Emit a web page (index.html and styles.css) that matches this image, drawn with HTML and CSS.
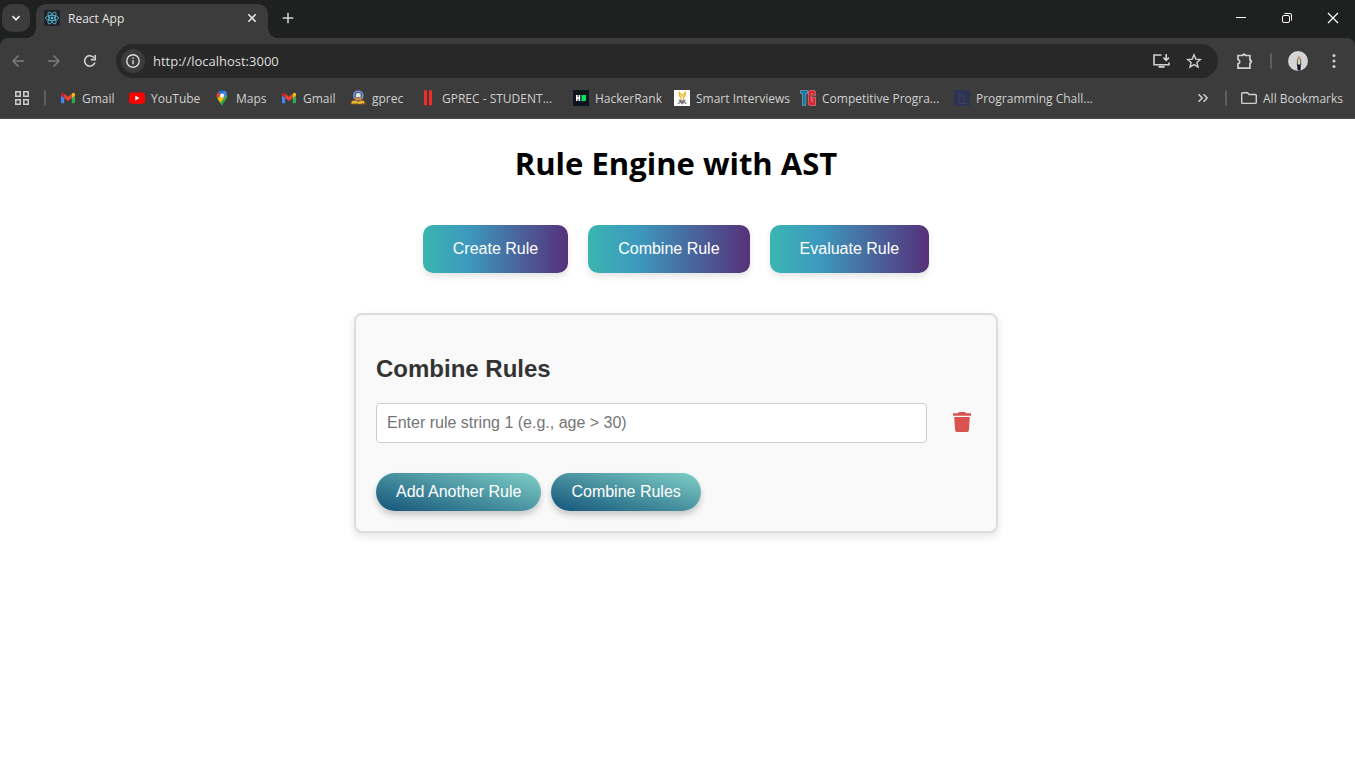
FILE: index.html
```html
<!DOCTYPE html>
<html lang="en">
<head>
<meta charset="utf-8">
<meta name="viewport" content="width=device-width, initial-scale=1">
<title>React App</title>
<link rel="stylesheet" href="styles.css">
</head>
<body>
<svg class="defs" width="0" height="0" aria-hidden="true">
  <symbol id="gmail" viewBox="0 0 16 16">
    <path fill="#4285f4" d="M1 4v8.300q0 .9.900.9H4.200V7z"/>
    <path fill="#34a853" d="M11.800 7v6.200h2.300q.9 0 .9-.9V4z"/>
    <path fill="#c5221f" d="M1 4.300q0-1.600 1.300-1.600.5 0 1 .4l.9.700V8L1 5.600z"/>
    <path fill="#ea4335" d="M4.200 3.800 8 6.700l3.800-2.900V8L8 10.900 4.200 8z"/>
    <path fill="#fbbc04" d="m11.800 3.800.9-.7q.5-.4 1-.4Q15 2.700 15 4.300v1.300L11.800 8z"/>
  </symbol>
</svg>

<header class="browser">
  <div class="tabstrip">
    <button class="tab-search" aria-label="Search tabs">
      <svg width="16" height="16" viewBox="0 0 16 16" fill="none" stroke="#e3e3e3" stroke-width="1.800"><path d="m4.500 6.200 3.500 3.500 3.500-3.500"/></svg>
    </button>
    <div class="tab">
      <svg width="16" height="16" viewBox="0 0 16 16" fill="none" stroke="#58c4dc" stroke-width=".8">
        <rect width="16" height="16" rx="2" fill="#20232a" stroke="none"/>
        <ellipse cx="8" cy="8" rx="6.600" ry="2.600"/>
        <ellipse cx="8" cy="8" rx="6.600" ry="2.600" transform="rotate(60 8 8)"/>
        <ellipse cx="8" cy="8" rx="6.600" ry="2.600" transform="rotate(120 8 8)"/>
        <circle cx="8" cy="8" r="1.300" fill="#58c4dc" stroke="none"/>
      </svg>
      <span class="tab-title">React App</span>
      <button class="icon-button" aria-label="Close tab">
        <svg width="16" height="16" viewBox="0 0 16 16" fill="none" stroke="#e3e3e3" stroke-width="1.600"><path d="m4.300 4.300 7.400 7.400m0-7.400-7.400 7.400"/></svg>
      </button>
    </div>
    <button class="icon-button new-tab" aria-label="New tab">
      <svg width="16" height="16" viewBox="0 0 16 16" fill="none" stroke="#d5d5d5" stroke-width="1.500"><path d="M8 2.700v10.600M2.700 8h10.600"/></svg>
    </button>
    <div class="window-controls">
      <button class="icon-button" aria-label="Minimize"><svg width="12" height="12" viewBox="0 0 12 12" stroke="#fff"><path d="M1 5.500h10"/></svg></button>
      <button class="icon-button" aria-label="Restore"><svg width="12" height="12" viewBox="0 0 12 12" fill="none" stroke="#fff"><rect x="1.500" y="3.500" width="7" height="7" rx="1.500"/><path d="M3.500 1.500H9q1.500 0 1.500 1.500v5.500"/></svg></button>
      <button class="icon-button" aria-label="Close"><svg width="12" height="12" viewBox="0 0 12 12" stroke="#fff" stroke-width="1.200"><path d="m1 1 10 10m0-10L1 11"/></svg></button>
    </div>
  </div>

  <div class="toolbar">
    <div class="nav">
      <button class="icon-button" aria-label="Back"><svg width="16" height="16" viewBox="0 0 16 16" fill="none" stroke="#7b7b7b" stroke-width="1.500"><path d="M14 8H3m5.500-5.500L3 8l5.500 5.500"/></svg></button>
      <button class="icon-button" aria-label="Forward"><svg width="16" height="16" viewBox="0 0 16 16" fill="none" stroke="#7b7b7b" stroke-width="1.500"><path d="M2 8h11M7.500 2.500 13 8l-5.500 5.500"/></svg></button>
      <button class="icon-button" aria-label="Reload"><svg width="16" height="16" viewBox="0 0 16 16" fill="none" stroke="#d0d0d0" stroke-width="1.700"><path d="M12.800 9.500A5.200 5.200 0 1 1 12 4.800"/><path d="M13.200 2v4.600H8.800" /></svg></button>
    </div>
    <div class="omnibox">
      <button class="site-info" aria-label="View site information"><svg width="16" height="16" viewBox="0 0 16 16" fill="none" stroke="#dcdcdc" stroke-width="1.400"><circle cx="8" cy="8" r="6.200"/><path d="M8 7.200v4M8 4.500V6"/></svg></button>
      <input class="address" type="text" aria-label="Address" value="http://localhost:3000">
      <button class="icon-button" aria-label="Install app"><svg width="18" height="16" viewBox="0 0 18 16" fill="none" stroke="#d0d0d0" stroke-width="1.600"><path d="M9.500 2H2v9.700h15V9.500"/><path d="M14.200 1v6M11.400 4.600l2.800 2.800L17 4.600"/><path d="M6.500 13.800h6" stroke-width="2"/></svg></button>
      <button class="icon-button" aria-label="Bookmark this tab"><svg width="16" height="16" viewBox="0 0 16 16" fill="none" stroke="#d0d0d0" stroke-width="1.400"><path d="m8 1.800 1.800 4.300 4.600.4-3.500 3 1.100 4.500L8 11.600 4 14l1.100-4.500-3.500-3 4.600-.4z"/></svg></button>
    </div>
    <div class="toolbar-end">
      <button class="icon-button" aria-label="Extensions"><svg width="18" height="18" viewBox="0 0 18 18" fill="none" stroke="#d0d0d0" stroke-width="1.700"><path d="M2 3.500h4.500a1.700 1.700 0 0 1 3.200 0h4.200V8a1.700 1.700 0 0 1 0 3.200v4.900H2v-4.300a2.200 2.200 0 0 0 0-4.300z"/><path fill="#d0d0d0" stroke="none" d="M6 3.400a2 2 0 0 1 4 0zM14.200 7.500a2 2 0 0 1 0 4z"/></svg></button>
      <span class="divider"></span>
      <button class="icon-button" aria-label="Profile"><svg width="20" height="20" viewBox="0 0 20 20"><circle cx="10" cy="10" r="10" fill="#d5d5d5"/><path fill="#c9a58c" d="M9.700 5h2.500v3H9.700z"/><path fill="#77774c" d="M9 8q2-1.500 4 0l.5 6H8.700z"/><path fill="#eee" d="M10.300 8h1.500v6h-1.500z"/><path fill="#15152b" d="M9 13.500h3.800l-.3 6H9.700z"/></svg></button>
      <button class="icon-button" aria-label="Menu"><svg width="16" height="16" viewBox="0 0 16 16" fill="#d0d0d0"><circle cx="8" cy="2.500" r="1.500"/><circle cx="8" cy="8" r="1.500"/><circle cx="8" cy="13.500" r="1.500"/></svg></button>
    </div>
  </div>

  <nav class="bookmarks" aria-label="Bookmarks">
    <button class="icon-button" aria-label="Apps"><svg width="16" height="16" viewBox="0 0 16 16" fill="none" stroke="#d0d0d0" stroke-width="1.500"><path d="M1.800 1.800h4.400v4.400H1.800zM9.800 1.800h4.400v4.400H9.800zM1.800 9.800h4.400v4.400H1.800zM9.800 9.800h4.400v4.400H9.800z"/></svg></button>
    <span class="divider"></span>
    <div class="bookmark-list">
      <a class="bookmark" href="#"><svg width="16" height="16"><use href="#gmail"/></svg><span>Gmail</span></a>
      <a class="bookmark" href="#"><svg width="16" height="16" viewBox="0 0 16 16"><rect y="2.500" width="16" height="11.300" rx="3" fill="#f00"/><path fill="#fff" d="m6.300 5.700 4.300 2.400-4.300 2.400z"/></svg><span>YouTube</span></a>
      <a class="bookmark" href="#"><svg width="16" height="16" viewBox="0 0 16 16"><path fill="#34a853" d="M2.800 7.800 8 16c1-4 5.300-6 5.300-10.500L11 3z"/><path fill="#fbbc04" d="M3.800 8.800 9.500 2l1 5.500-4.300 5.200C5.400 11 4.500 10 3.800 8.800z"/><path fill="#4285f4" d="M7 4.500 10 .5q2.300 1 3 3.300L9.500 8z"/><path fill="#1a73e8" d="M4 2Q6.500-.6 10 .5L6.500 5z"/><path fill="#ea4335" d="m4 2 2.700 2.500-3.300 4Q1.600 4.800 4 2z"/><circle cx="8" cy="5.500" r="2" fill="#fff"/></svg><span>Maps</span></a>
      <a class="bookmark" href="#"><svg width="16" height="16"><use href="#gmail"/></svg><span>Gmail</span></a>
      <a class="bookmark" href="#"><svg width="16" height="16" viewBox="0 0 16 16"><circle cx="8.300" cy="5.500" r="5.300" fill="#8590b4"/><circle cx="8.300" cy="5.500" r="3.800" fill="#3268b2"/><path fill="#f1e6d2" d="M6 4q2.300-2 4.600 0v3H6z"/><path fill="#e1883d" d="M5 7.500h6.500V10H5z"/><path fill="#63442b" d="m1 10.300 4-.8 3.300 1.500L12 9.500l3 .8.8 4.700H.2z"/><path fill="#eab42f" d="m2 11 4-.4 2.300 1.200 2.500-1.200 3.300.4.500 2.300-5 .8-2.300-.5-6 .2z"/></svg><span>gprec</span></a>
      <a class="bookmark" href="#"><svg width="16" height="16" viewBox="0 0 16 16" fill="#ef2c25"><rect x="4" width="3" height="15.500" rx="1.200"/><rect x="9" width="3" height="15.500" rx="1.200"/></svg><span>GPREC - STUDENT...</span></a>
      <a class="bookmark" href="#"><svg width="16" height="16" viewBox="0 0 16 16"><path fill="#0e141e" d="M0 0h16v16H0z"/><path fill="#fff" d="M3 5h1.600v2.200h1V5h1.600v6H5.600V8.800h-1V11H3z"/><path fill="#05e660" d="M8.500 5H13v6H8.500z"/></svg><span>HackerRank</span></a>
      <a class="bookmark" href="#"><svg width="16" height="16" viewBox="0 0 16 16"><path fill="#fff" d="M0 0h16v16H0z"/><path fill="none" stroke="#e9b92d" stroke-width="1.300" d="M5.300 1.500v3.300Q5.500 6.500 7 7v2.500M11.300 1.500v3.300Q11 6.500 9.500 7v2.500M5.500 2.800 8.300 5.800l2.800-3"/><path fill="none" stroke="#777" stroke-width="1.300" d="M4.800 10.500h2l1.300 1.300 1.300-1.300h2M4 13.700l2.500-1.900 1.700 1.900 1.600-1.900 2.600 1.900"/></svg><span>Smart Interviews</span></a>
      <a class="bookmark" href="#"><svg width="16" height="16" viewBox="0 0 16 16"><path fill="#087baa" stroke="#9bb5bd" stroke-width=".6" d="M.4.400h7.200v3H5.800v12H2.500v-12H.4z"/><path fill="#e51c2c" stroke="#e2a2a5" stroke-width=".6" d="M10 .5h3.700q1.900 0 1.900 2.200v2.600h-2.800V3.500h-1.500v8.700h1.500V9.600h-1V7.200h3.800v8.200H10q-1.700 0-1.700-2.300V2.700Q8.300.5 10 .5z"/></svg><span>Competitive Progra...</span></a>
      <a class="bookmark" href="#"><svg width="16" height="16" viewBox="0 0 16 16"><rect width="16" height="16" rx="1" fill="#2c3454"/><path fill="none" stroke="#3c3f58" stroke-width="1.600" d="M5.500 2.500v8.700m0-3.500q.3-1.700 2.500-1.700t2.300 2v3.200M4 13.200h8.500"/></svg><span>Programming Chall...</span></a>
    </div>
    <button class="icon-button" aria-label="More bookmarks"><svg width="16" height="16" viewBox="0 0 16 16" fill="none" stroke="#d0d0d0" stroke-width="1.500"><path d="M3.500 4.300 7.200 8l-3.700 3.700M8.500 4.300 12.200 8l-3.700 3.700"/></svg></button>
    <span class="divider"></span>
    <a class="bookmark all" href="#"><svg width="16" height="16" viewBox="0 0 16 16" fill="none" stroke="#d0d0d0" stroke-width="1.400"><path d="M1.700 2.700h4.800l1.700 1.800h6.100q1 0 1 1v6.900q0 1-1 1H1.700q-1 0-1-1V3.700q0-1 1-1z"/></svg><span>All Bookmarks</span></a>
  </nav>
</header>

<main class="page">
  <h1 class="title">Rule Engine with AST</h1>
  <div class="modes">
    <button class="mode">Create Rule</button>
    <button class="mode">Combine Rule</button>
    <button class="mode">Evaluate Rule</button>
  </div>
  <form class="card">
    <h2 class="card-title">Combine Rules</h2>
    <div class="rule">
      <input class="rule-input" type="text" aria-label="Rule string 1" placeholder="Enter rule string 1 (e.g., age &gt; 30)">
      <button class="remove" type="button" aria-label="Remove rule"><svg width="18" height="20" viewBox="0 0 18 20" fill="#d9534f"><path d="M0 1.300h5l1-1.300h6l1 1.300h5v2.400H0zM1.200 5h15.600l-.9 13.200q-.1 1.800-1.900 1.800H4q-1.800 0-1.900-1.800z"/></svg></button>
    </div>
    <div class="actions">
      <button class="action" type="button">Add Another Rule</button>
      <button class="action" type="button">Combine Rules</button>
    </div>
  </form>
</main>
</body>
</html>
```
FILE: styles.css
```css
* { box-sizing: border-box; }

body {
  margin: 0;
  background: #fff;
  font-family: "Liberation Sans", Arial, sans-serif;
}

button, input { font: inherit; }
button { border: 0; padding: 0; cursor: pointer; }
svg { display: block; flex: none; }
.defs { position: absolute; }

.browser {
  background: #1f2120;
  color: #d0d0d0;
  font-family: "Segoe UI", "Open Sans", sans-serif;
  font-size: 12px;
}

.icon-button { display: grid; place-items: center; background: none; }

.tabstrip {
  display: flex;
  align-items: center;
  height: 38px;
}

.tab-search {
  position: relative;
  z-index: 1;
  display: grid;
  place-items: center;
  width: 28px;
  height: 28px;
  margin: 0 6px 2px 2px;
  border-radius: 10px;
  background: #3c3c3c;
}

.tab {
  position: relative;
  display: flex;
  align-items: center;
  gap: 8px;
  align-self: flex-end;
  width: 232px;
  height: 34px;
  padding: 0 8px 6px;
  border-radius: 10px 10px 0 0;
  background: #3c3c3c;
  color: #e3e3e3;
}

.tab::before, .tab::after {
  content: "";
  position: absolute;
  bottom: 0;
  width: 10px;
  height: 10px;
}
.tab::before { left: -10px; background: radial-gradient(circle at 0 0, #1f2120 10px, #3c3c3c 10px); }
.tab::after { right: -10px; background: radial-gradient(circle at 100% 0, #1f2120 10px, #3c3c3c 10px); }
.tab-title { flex: 1; }
.new-tab { margin: 0 0 2px 12px; }

.window-controls { display: flex; margin: 0 -1px 2px auto; }
.window-controls .icon-button { width: 46px; height: 36px; }

.toolbar {
  display: flex;
  align-items: center;
  padding-top: 6px;
  border-radius: 8px 8px 0 0;
  background: #3c3c3c;
}

.nav { display: flex; gap: 20px; padding: 0 18px 0 10px; }

.omnibox {
  display: flex;
  flex: 1;
  align-items: center;
  gap: 16px;
  height: 34px;
  padding: 0 16px 0 5px;
  border-radius: 17px;
  background: #282828;
}

.site-info {
  display: grid;
  place-items: center;
  width: 24px;
  height: 24px;
  border-radius: 12px;
  background: #3c3c3c;
}

.address {
  flex: 1;
  min-width: 0;
  margin-left: -8px;
  padding: 0;
  border: 0;
  outline: 0;
  background: none;
  color: #dedede;
  font-size: 13px;
}

.toolbar-end { display: flex; align-items: center; gap: 16px; padding: 0 13px 0 18px; }
.toolbar-end .icon-button:last-child { margin-left: 2px; }
.divider { width: 2px; height: 16px; border-radius: 1px; background: #5e5e5e; }

.bookmarks {
  display: flex;
  align-items: center;
  gap: 14px;
  height: 41px;
  padding: 0 12px 0 14px;
  border-bottom: 1px solid #4a4a4a;
  background: #3c3c3c;
}

.bookmark-list {
  display: grid;
  flex: 1;
  grid-template-columns: 69px 85px 67px 69px 70px 153px 101px 126px 154px auto;
  min-width: 0;
}
.bookmark {
  display: flex;
  align-items: center;
  gap: 6px;
  color: inherit;
  text-decoration: none;
  white-space: nowrap;
}

.page { padding: 0 23px 20px 20px; }

.title {
  margin: 22px 0 40px;
  color: #000;
  font-family: "Segoe UI", "Open Sans", sans-serif;
  font-size: 31px;
  font-weight: 700;
  line-height: 44px;
  text-align: center;
}

.modes { display: flex; flex-wrap: wrap; justify-content: center; gap: 20px; }
.mode {
  padding: 15px 30px;
  border-radius: 10px;
  background: linear-gradient(to right, #3ab5b0 0%, #3d99be 31%, #56317a 100%);
  box-shadow: 0 4px 6px rgba(0, 0, 0, .1);
  color: #fff;
  font-size: 16px;
  line-height: 18px;
}

.card {
  max-width: 644px;
  margin: 40px auto 0;
  padding: 20px;
  border: 2px solid #ddd;
  border-radius: 8px;
  background: #f9f9f9;
  box-shadow: 0 4px 8px rgba(0, 0, 0, .1);
}

.card-title { margin: 20px 0; color: #333; font-size: 24px; line-height: 28px; }
.rule { display: flex; align-items: center; margin-bottom: 30px; }
.rule-input {
  flex: 1;
  min-width: 0;
  height: 40px;
  padding: 10px;
  border: 1px solid #ccc;
  border-radius: 4px;
  background: #fff;
  font-size: 16px;
}
.rule-input::placeholder { color: #757575; }
.remove { margin-left: 21px; padding: 4px 5px 6px; background: none; }

.actions { display: flex; flex-wrap: wrap; gap: 10px; }
.action {
  padding: 10px 20px;
  border-radius: 20px;
  background: linear-gradient(15deg, #13547a 0%, #80d0c7 100%);
  box-shadow: 0 4px 6px rgba(0, 0, 0, .2);
  color: #fff;
  font-size: 16px;
  line-height: 18px;
}
```
